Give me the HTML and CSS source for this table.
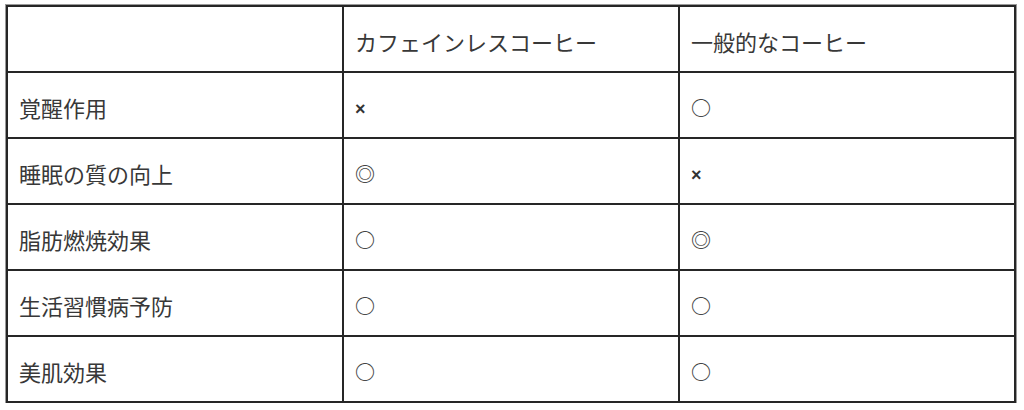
FILE: index.html
```html
<!DOCTYPE html>
<html lang="ja">
<head>
<meta charset="utf-8">
<link rel="stylesheet" href="styles.css">
</head>
<body>
<table class="compare">
  <tr class="head">
    <td></td>
    <td>カフェインレスコーヒー</td>
    <td>一般的なコーヒー</td>
  </tr>
  <tr>
    <td>覚醒作用</td>
    <td><span class="mark-x">×</span></td>
    <td><span class="mark">○</span></td>
  </tr>
  <tr>
    <td>睡眠の質の向上</td>
    <td><span class="mark">◎</span></td>
    <td><span class="mark-x">×</span></td>
  </tr>
  <tr>
    <td>脂肪燃焼効果</td>
    <td><span class="mark">○</span></td>
    <td><span class="mark">◎</span></td>
  </tr>
  <tr>
    <td>生活習慣病予防</td>
    <td><span class="mark">○</span></td>
    <td><span class="mark">○</span></td>
  </tr>
  <tr>
    <td>美肌効果</td>
    <td><span class="mark">○</span></td>
    <td><span class="mark">○</span></td>
  </tr>
</table>
</body>
</html>
```

FILE: styles.css
```css
html, body {
  margin: 0;
  padding: 0;
  background: #fff;
}
body {
  padding: 5px 0 0 6px;
  font-family: "Noto Sans CJK JP", "Noto Sans", sans-serif;
  color: #383838;
}
.compare {
  border-collapse: collapse;
  width: 1010px;
  table-layout: fixed;
  box-shadow: 0 0 0 1px #9a9a9a;
}
.compare td {
  border: 2px solid #262626;
  height: 66px;
  padding: 3px 10px 0 11px;
  font-size: 22px;
  line-height: 30px;
  vertical-align: middle;
  box-sizing: border-box;
}
.mark-x {
  font-family: "Liberation Sans", sans-serif;
  font-size: 18px;
  font-weight: bold;
  color: #333;
}
.mark {
  font-size: 20px;
  font-weight: bold;
  color: #444;
}
```
